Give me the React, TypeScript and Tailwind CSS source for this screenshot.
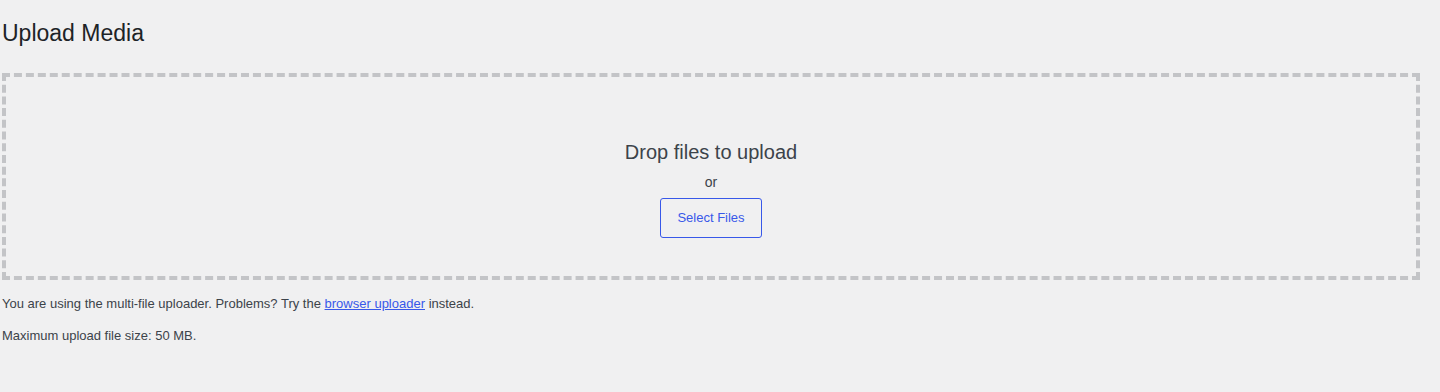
import React from 'react';

export default function App() {
  return (
    <div
      className="min-h-[392px] bg-[#f0f0f1] text-[#3c434a] text-[13px] pl-[2px] pr-[20px]"
      style={{ fontFamily: '"Liberation Sans", Arial, sans-serif' }}
    >
      <h1 className="pt-[18px] text-[23px] leading-[30px] font-normal text-[#1d2327]">Upload Media</h1>

      {/* drop area */}
      <div className="mt-[25px] h-[207px] border-4 border-dashed border-[#c3c4c7] flex flex-col items-center">
        <p className="mt-[61px] text-[20px] leading-[28px] text-[#3c434a]">Drop files to upload</p>
        <p className="mt-[7px] text-[14px] leading-[18px]">or</p>
        <button
          type="button"
          className="mt-[7px] h-[40px] w-[102px] rounded-[3px] border border-[#3858e9] text-[#3858e9] text-[13px] bg-transparent"
        >
          Select Files
        </button>
      </div>

      <p className="mt-[15px] leading-[18px]">
        You are using the multi-file uploader. Problems? Try the{' '}
        <a href="#" className="text-[#3858e9] underline">
          browser uploader
        </a>{' '}
        instead.
      </p>
      <p className="mt-[14px] leading-[18px]">Maximum upload file size: 50 MB.</p>
    </div>
  );
}
